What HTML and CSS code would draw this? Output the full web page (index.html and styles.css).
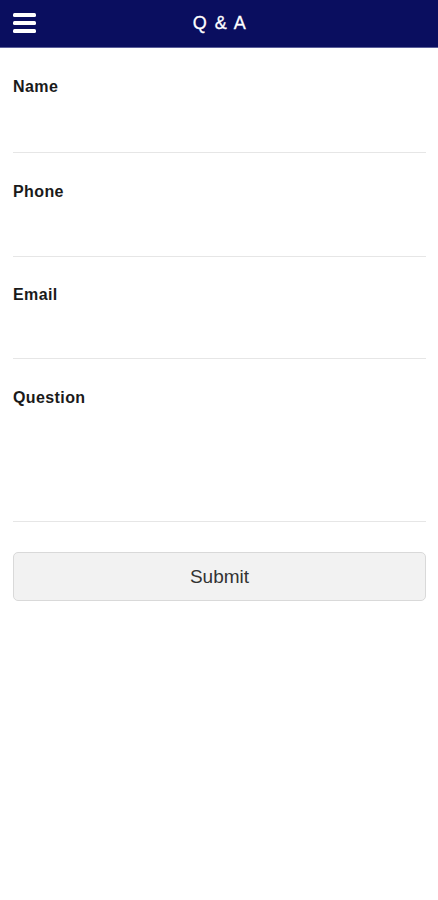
FILE: index.html
```html
<!DOCTYPE html>
<html>
<head>
<meta charset="utf-8">
<link rel="stylesheet" href="styles.css">
</head>
<body>
<header class="topbar">
  <button class="menu" aria-label="Menu">
    <svg width="23" height="20" viewBox="0 0 23 20"><rect x="0" y="0" width="23" height="4" rx="1.5" fill="#fff"/><rect x="0" y="8" width="23" height="4" rx="1.5" fill="#fff"/><rect x="0" y="16" width="23" height="4" rx="1.5" fill="#fff"/></svg>
  </button>
  <h1 class="title">Q &amp; A</h1>
</header>
<form class="form">
  <label class="field"><span class="label">Name</span><input class="input" type="text"></label>
  <label class="field"><span class="label">Phone</span><input class="input" type="tel"></label>
  <label class="field field-short"><span class="label">Email</span><input class="input" type="email"></label>
  <label class="field field-tall"><span class="label">Question</span><textarea class="input area"></textarea></label>
  <button type="button" class="submit">Submit</button>
</form>
</body>
</html>
```
FILE: styles.css
```css
* { box-sizing: border-box; }
html, body { margin: 0; padding: 0; background: #fff; }
body { font-family: "Liberation Sans", Arial, sans-serif; width: 438px; }
.topbar {
  height: 48px;
  background: #0a0e5f;
  border-bottom: 1px solid #5b5f9a;
  display: flex;
  align-items: center;
  justify-content: center;
  position: relative;
}
.menu {
  position: absolute;
  left: 13px;
  top: 13px;
  padding: 0;
  border: 0;
  background: none;
  display: flex;
}
.title {
  margin: 0;
  color: #fff;
  font-size: 18px;
  font-weight: normal;
  letter-spacing: 1.5px;
  line-height: 1;
  padding-bottom: 2px;
  padding-left: 2px;
  -webkit-text-stroke: 0.3px #fff;
}
.form {
  padding: 0 12px 0 13px;
  display: flex;
  flex-direction: column;
}
.field {
  height: 104px;
  display: flex;
  flex-direction: column;
  padding-top: 31px;
  border-bottom: 1px solid #e6e6e6;
}
.field:first-child { height: 105px; }
.field-short { height: 102px; padding-top: 30px; }
.field-tall { height: 163px; }
.label {
  font-size: 16px;
  font-weight: bold;
  color: #1a1a1a;
  letter-spacing: 0.4px;
  line-height: 16px;
}
.input {
  flex: 1;
  border: 0;
  outline: none;
  background: transparent;
  font: inherit;
  resize: none;
}
.submit {
  margin-top: 30px;
  height: 49px;
  background: #f2f2f2;
  border: 1px solid #d9d9d9;
  border-radius: 5px;
  font-family: "Liberation Sans", Arial, sans-serif;
  font-size: 19px;
  color: #333;
}
```
